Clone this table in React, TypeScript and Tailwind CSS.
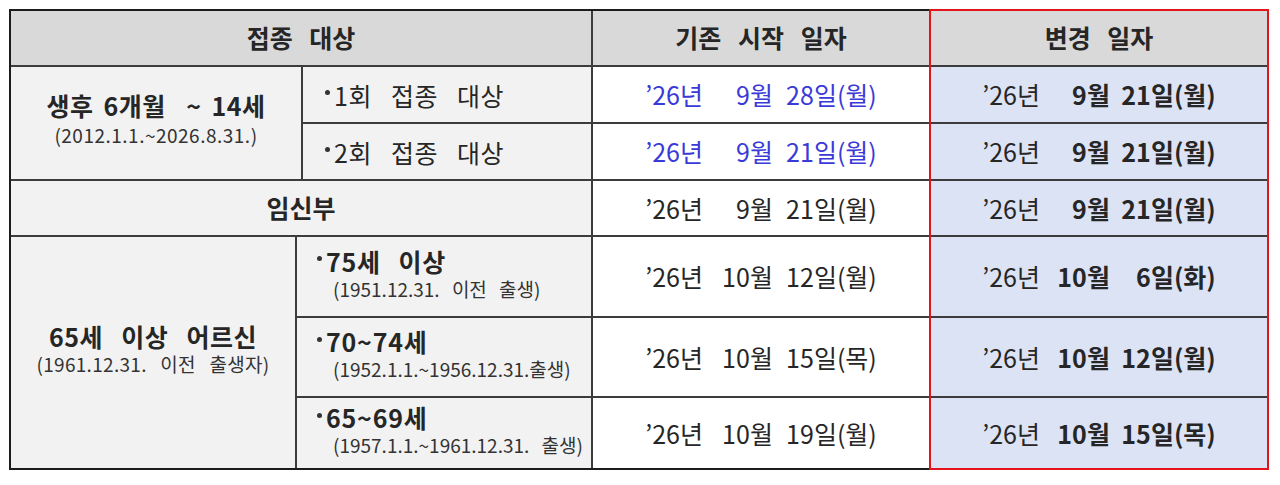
import React from 'react';

const font = { fontFamily: '"Noto Sans CJK KR", "Noto Sans", sans-serif' };

type DateProps = {
  month: string;
  day: string;
  dow: string;
  blue?: boolean;
  bold?: boolean;
};

// '26년 + 월(우측 정렬) + 일(우측 정렬) + (요일)
function DateText({ month, day, dow, blue, bold }: DateProps) {
  const strong = bold ? 'font-bold' : '';
  return (
    <div
      className={`flex items-baseline whitespace-nowrap text-[25px] leading-none ${
        blue ? 'text-[#3a3ad8]' : 'text-[#262626]'
      }`}
    >
      <span>’26년</span>
      <span className={`inline-block w-[70px] text-right ${strong}`}>{month}월</span>
      <span className={`inline-block w-[64px] text-right ${strong}`}>{day}일</span>
      <span className={strong}>({dow})</span>
    </div>
  );
}

function Bullet({ children, bold }: { children: React.ReactNode; bold?: boolean }) {
  return (
    <div
      className={`flex items-center text-[25px] leading-[28px] text-[#262626] ${
        bold ? 'font-bold tracking-[0.8px] [word-spacing:11px]' : 'tracking-[0.5px] [word-spacing:13px]'
      }`}
    >
      <span className="mr-[4px] h-[5px] w-[5px] -translate-y-[2px] rounded-full bg-[#333]" />
      <span>{children}</span>
    </div>
  );
}

function ElderRow({ title, sub }: { title: string; sub: string }) {
  return (
    <div className="flex flex-col justify-center bg-[#f2f2f2] pb-[6px] pl-[20px]">
      <Bullet bold>{title}</Bullet>
      <div className="mt-[2px] pl-[16px] text-[19px] leading-[24px] text-[#333] [word-spacing:8px]">{sub}</div>
    </div>
  );
}

export default function App() {
  const cell = 'flex items-center justify-center';
  const changed = 'flex items-center justify-center bg-[#dce3f4]';
  const head =
    'flex items-center justify-center bg-[#d9d9d9] text-[25px] font-bold text-[#262626] [word-spacing:11px]';

  return (
    <div className="min-h-[485px] bg-white pl-[9px] pt-[9px]" style={font}>
      <div className="relative w-[1260px] border-2 border-[#1c1c1c] bg-[#3c3c3c]">
        <div className="grid grid-cols-[284px_4px_288px_336px_336px] grid-rows-[54px_55px_55px_54px_79px_78px_70px] gap-[2px]">
          {/* 헤더 */}
          <div className={`${head} col-span-3`}>접종 대상</div>
          <div className={head}>기존 시작 일자</div>
          <div className={head}>변경 일자</div>

          {/* 생후 6개월 ~ 14세 */}
          <div className="col-span-2 row-span-2 flex flex-col items-center justify-center gap-[5px] bg-[#f2f2f2] pb-[10px]">
            <div className="text-[25px] font-bold leading-[28px] tracking-[0.5px] text-[#262626] [word-spacing:4px]">
              생후 6개월&nbsp; ~ 14세
            </div>
            <div className="text-[19px] leading-[22px] tracking-[0.5px] text-[#333]">(2012.1.1.~2026.8.31.)</div>
          </div>
          <div className="flex items-center bg-[#f2f2f2] pl-[22px]">
            <Bullet>1회 접종 대상</Bullet>
          </div>
          <div className={`${cell} bg-white`}>
            <DateText month="9" day="28" dow="월" blue />
          </div>
          <div className={changed}>
            <DateText month="9" day="21" dow="월" bold />
          </div>

          <div className="flex items-center bg-[#f2f2f2] pl-[22px]">
            <Bullet>2회 접종 대상</Bullet>
          </div>
          <div className={`${cell} bg-white`}>
            <DateText month="9" day="21" dow="월" blue />
          </div>
          <div className={changed}>
            <DateText month="9" day="21" dow="월" bold />
          </div>

          {/* 임신부 */}
          <div className="col-span-3 flex items-center justify-center bg-[#f2f2f2] text-[25px] font-bold text-[#262626]">
            임신부
          </div>
          <div className={`${cell} bg-white`}>
            <DateText month="9" day="21" dow="월" />
          </div>
          <div className={changed}>
            <DateText month="9" day="21" dow="월" bold />
          </div>

          {/* 65세 이상 어르신 */}
          <div className="row-span-3 flex flex-col items-center justify-center gap-[3px] bg-[#f2f2f2] pb-[8px]">
            <div className="text-[25px] font-bold leading-[28px] tracking-[0.5px] text-[#262626] [word-spacing:12px]">
              65세 이상 어르신
            </div>
            <div className="text-[19px] leading-[22px] tracking-[0.3px] text-[#333] [word-spacing:9px]">
              (1961.12.31. 이전 출생자)
            </div>
          </div>
          <div className="col-span-2 grid">
            <ElderRow title="75세 이상" sub="(1951.12.31. 이전 출생)" />
          </div>
          <div className={`${cell} bg-white`}>
            <DateText month="10" day="12" dow="월" />
          </div>
          <div className={changed}>
            <DateText month="10" day="6" dow="화" bold />
          </div>

          <div className="col-span-2 grid">
            <ElderRow title="70~74세" sub="(1952.1.1.~1956.12.31.출생)" />
          </div>
          <div className={`${cell} bg-white`}>
            <DateText month="10" day="15" dow="목" />
          </div>
          <div className={changed}>
            <DateText month="10" day="12" dow="월" bold />
          </div>

          <div className="col-span-2 grid">
            <ElderRow title="65~69세" sub="(1957.1.1.~1961.12.31. 출생)" />
          </div>
          <div className={`${cell} bg-white`}>
            <DateText month="10" day="19" dow="월" />
          </div>
          <div className={changed}>
            <DateText month="10" day="15" dow="목" bold />
          </div>
        </div>

        {/* 변경 일자 강조 테두리 */}
        <div className="pointer-events-none absolute top-[-2px] right-[-2px] bottom-[-2px] left-[918px] border-2 border-[#e3141c]" />
      </div>
    </div>
  );
}
